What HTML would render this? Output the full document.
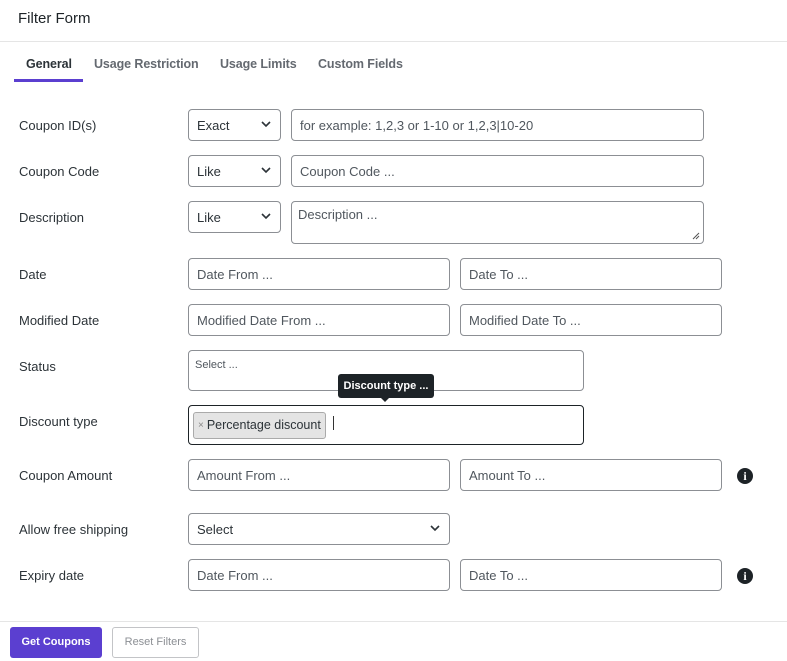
<!DOCTYPE html>
<html><head><meta charset="utf-8"><style>
*{box-sizing:border-box;margin:0;padding:0}
body{width:787px;height:661px;background:#fff;font-family:"Liberation Sans",sans-serif;color:#2c3338;position:relative;overflow:hidden;font-size:13px}
.a{position:absolute}
.lbl{position:absolute;left:19px;font-size:13px;color:#2c3338;line-height:16px}
.box{position:absolute;border:1px solid #8c8f94;border-radius:4px;background:#fff;font-size:13px;color:#50575e;padding-left:8px;display:flex;align-items:center}
.sel{color:#2c3338}
.chev{position:absolute;right:9px;top:50%;margin-top:-4px}
.info{position:absolute;width:16px;height:16px;border-radius:50%;background:#1d2327;color:#fff;font:bold 12px "Liberation Serif",serif;text-align:center;line-height:16px}
.tab{position:absolute;top:57px;font-size:12.5px;font-weight:bold;color:#646970;letter-spacing:-0.1px}
</style></head><body>
<div class="a" style="left:18px;top:10px;font-size:15px;color:#1d2327">Filter Form</div>
<div class="a" style="left:0;top:41px;width:787px;height:1px;background:#e5e5e5"></div>
<div class="tab" style="left:26px;color:#2c3338">General</div>
<div class="tab" style="left:94px">Usage Restriction</div>
<div class="tab" style="left:220px">Usage Limits</div>
<div class="tab" style="left:318px">Custom Fields</div>
<div class="a" style="left:14px;top:79px;width:69px;height:3px;background:#5b3fd0"></div>

<div class="lbl" style="top:118px">Coupon ID(s)</div>
<div class="box sel" style="left:188px;top:109px;width:93px;height:32px">Exact<svg class="chev" width="10" height="7" viewBox="0 0 10 7"><path d="M1 1l4 4 4-4" stroke="#2c3338" stroke-width="1.6" fill="none"/></svg></div>
<div class="box" style="left:291px;top:109px;width:413px;height:32px">for example: 1,2,3 or 1-10 or 1,2,3|10-20</div>

<div class="lbl" style="top:164px">Coupon Code</div>
<div class="box sel" style="left:188px;top:155px;width:93px;height:32px">Like<svg class="chev" width="10" height="7" viewBox="0 0 10 7"><path d="M1 1l4 4 4-4" stroke="#2c3338" stroke-width="1.6" fill="none"/></svg></div>
<div class="box" style="left:291px;top:155px;width:413px;height:32px">Coupon Code ...</div>

<div class="lbl" style="top:210px">Description</div>
<div class="box sel" style="left:188px;top:201px;width:93px;height:32px">Like<svg class="chev" width="10" height="7" viewBox="0 0 10 7"><path d="M1 1l4 4 4-4" stroke="#2c3338" stroke-width="1.6" fill="none"/></svg></div>
<div class="box" style="left:291px;top:201px;width:413px;height:43px;align-items:flex-start;padding-top:5px;padding-left:6px">Description ...<svg class="a" style="right:3px;bottom:3px" width="8" height="8" viewBox="0 0 8 8"><path d="M7 1L1 7M7 4L4 7" stroke="#555" stroke-width="1"/></svg></div>

<div class="lbl" style="top:267px">Date</div>
<div class="box" style="left:188px;top:258px;width:262px;height:32px">Date From ...</div>
<div class="box" style="left:460px;top:258px;width:262px;height:32px">Date To ...</div>

<div class="lbl" style="top:313px">Modified Date</div>
<div class="box" style="left:188px;top:304px;width:262px;height:32px">Modified Date From ...</div>
<div class="box" style="left:460px;top:304px;width:262px;height:32px">Modified Date To ...</div>

<div class="lbl" style="top:359px">Status</div>
<div class="box" style="left:188px;top:350px;width:396px;height:41px;align-items:flex-start;padding-top:8px;padding-left:6px;font-size:11px">Select ...</div>

<div class="lbl" style="top:414px">Discount type</div>
<div class="box" style="left:188px;top:405px;width:396px;height:40px;border:1.5px solid #1d2327;padding-left:4px">
 <div style="border:1px solid #aaa;background:#e4e4e4;border-radius:3px;height:27px;padding:0 4px;display:flex;align-items:center;color:#2c3338;font-size:12.5px"><span style="color:#888;font-size:10px;margin-right:3px">×</span>Percentage discount</div>
 <div style="width:1px;height:14px;background:#333;margin-left:7px;margin-top:-4px"></div>
</div>
<div class="a" style="left:338px;top:374px;width:96px;height:24px;background:#1d2327;border-radius:3px;color:#fff;font-size:11px;font-weight:bold;text-align:center;line-height:24px">Discount type ...</div>
<div class="a" style="left:381px;top:398px;width:0;height:0;border-left:4px solid transparent;border-right:4px solid transparent;border-top:4px solid #1d2327"></div>

<div class="lbl" style="top:468px">Coupon Amount</div>
<div class="box" style="left:188px;top:459px;width:262px;height:32px">Amount From ...</div>
<div class="box" style="left:460px;top:459px;width:262px;height:32px">Amount To ...</div>
<div class="info" style="left:737px;top:468px">i</div>

<div class="lbl" style="top:522px">Allow free shipping</div>
<div class="box sel" style="left:188px;top:513px;width:262px;height:32px">Select<svg class="chev" width="10" height="7" viewBox="0 0 10 7"><path d="M1 1l4 4 4-4" stroke="#2c3338" stroke-width="1.6" fill="none"/></svg></div>

<div class="lbl" style="top:568px">Expiry date</div>
<div class="box" style="left:188px;top:559px;width:262px;height:32px">Date From ...</div>
<div class="box" style="left:460px;top:559px;width:262px;height:32px">Date To ...</div>
<div class="info" style="left:737px;top:568px">i</div>

<div class="a" style="left:0;top:621px;width:787px;height:1px;background:#e5e5e5"></div>
<div class="a" style="left:10px;top:627px;width:92px;height:31px;background:#5b3fd0;border-radius:3px;color:#fff;font-size:11px;font-weight:bold;text-align:center;line-height:31px">Get Coupons</div>
<div class="a" style="left:112px;top:627px;width:87px;height:31px;border:1px solid #c3c4c7;border-radius:3px;color:#8c8f94;font-size:11px;text-align:center;line-height:29px">Reset Filters</div>
</body></html>
